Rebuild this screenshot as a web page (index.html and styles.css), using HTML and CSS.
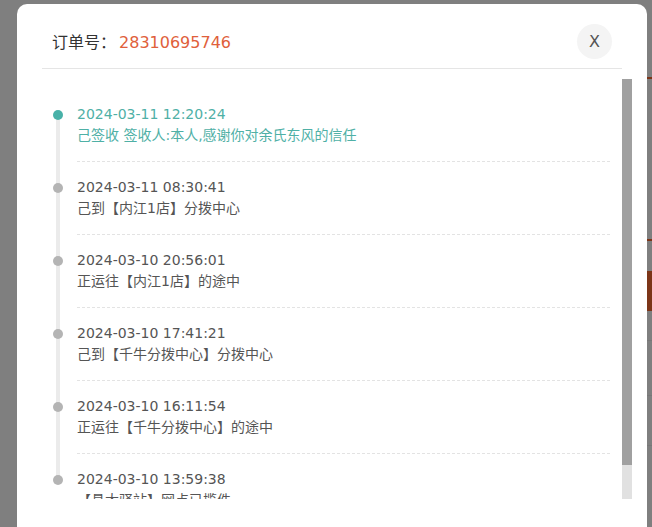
FILE: index.html
```html
<!doctype html>
<html lang="zh-CN">
  <head>
    <meta charset="UTF-8" />
    <meta name="viewport" content="width=device-width, initial-scale=1.0" />
    <title>物流详情</title>
    <link rel="stylesheet" href="styles.css">
  </head>
  <body>
    <!-- page behind the dialog (only its right edge shows) -->
    <div class="page">
      <div class="page-top"></div>
      <div class="page-bar"></div>
      <div class="page-button"></div>
      <div class="page-row"></div>
      <div class="page-row"></div>
      <div class="page-row"></div>
    </div>

    <div class="mask">
      <div class="dialog">
        <header class="dialog-head">
          <h3><span class="label">订单号：</span><span class="order-no">28310695746</span></h3>
          <button class="close-btn" type="button">X</button>
        </header>
        <div class="track-wrap">
          <div class="track-scroll">
            <ul class="track-list">
              <li class="track-item current">
                <div class="track-body">
                  <p class="track-time">2024-03-11 12:20:24</p>
                  <p class="track-text">己签收 签收人:本人,感谢你对余氏东风的信任</p>
                </div>
              </li>
              <li class="track-item">
                <div class="track-body">
                  <p class="track-time">2024-03-11 08:30:41</p>
                  <p class="track-text">己到【内江1店】分拨中心</p>
                </div>
              </li>
              <li class="track-item">
                <div class="track-body">
                  <p class="track-time">2024-03-10 20:56:01</p>
                  <p class="track-text">正运往【内江1店】的途中</p>
                </div>
              </li>
              <li class="track-item">
                <div class="track-body">
                  <p class="track-time">2024-03-10 17:41:21</p>
                  <p class="track-text">己到【千牛分拨中心】分拨中心</p>
                </div>
              </li>
              <li class="track-item">
                <div class="track-body">
                  <p class="track-time">2024-03-10 16:11:54</p>
                  <p class="track-text">正运往【千牛分拨中心】的途中</p>
                </div>
              </li>
              <li class="track-item">
                <div class="track-body">
                  <p class="track-time">2024-03-10 13:59:38</p>
                  <p class="track-text">【悬大驿站】网点已揽件</p>
                </div>
              </li>
            </ul>
          </div>
          <!-- scroll rail -->
          <div class="scroll-rail">
            <div class="scroll-thumb"></div>
          </div>
        </div>
      </div>
    </div>
  </body>
</html>
```

FILE: styles.css
```css
body {
  margin: 0;
  padding: 0;
  font-family: "DejaVu Sans", "Noto Sans CJK SC", sans-serif;
  background-color: #fff;
  overflow: hidden;
}

/* Page behind the mask */
.page {
  width: 40px;
  height: 527px;
  margin-left: auto;
}

.page-top {
  height: 77px;
  border-bottom: 2px solid #f86a30;
}

.page-bar {
  height: 160px;
  border-bottom: 2px solid #f86a30;
}

.page-button {
  height: 40px;
  margin-top: 30px;
  background-color: #f86a30;
}

.page-row {
  height: 29px;
  border-bottom: 1px solid #eee;
}

.page-row + .page-row {
  height: 54px;
}

.page-row:last-child {
  height: 49px;
}

/* Mask + dialog */
.mask {
  position: fixed;
  inset: 0;
  background-color: rgba(0, 0, 0, 0.5);
}

.dialog {
  position: absolute;
  top: 4px;
  left: 17px;
  width: 630px;
  height: 560px;
  background-color: #fff;
  border-radius: 10px;
}

.dialog-head {
  display: flex;
  justify-content: space-between;
  align-items: center;
  margin: 0 25px;
  padding: 20px 10px 9px;
  border-bottom: 1px solid #e5e5e5;
}

.dialog-head h3 {
  margin: 0;
  font-size: 16px;
  font-weight: normal;
  color: #333;
  line-height: 22px;
}

.dialog-head .label {
  font-family: "Noto Sans CJK SC", sans-serif;
  margin-right: 3px;
}

.order-no {
  color: #e0603b;
}

.close-btn {
  width: 35px;
  height: 35px;
  padding: 0;
  border: none;
  border-radius: 50%;
  background-color: #f4f4f4;
  color: #555;
  font-family: "DejaVu Sans", sans-serif;
  font-size: 16px;
  line-height: 35px;
  cursor: pointer;
}

/* Track list with its scroll rail */
.track-wrap {
  display: flex;
  margin: 10px 15px 0 25px;
  height: 420px;
}

.track-scroll {
  flex: 1;
  overflow: hidden;
}

.scroll-rail {
  width: 10px;
  background-color: #e1e1e1;
}

.scroll-thumb {
  height: 386px;
  background-color: #a0a0a0;
}

.track-list {
  list-style: none;
  margin: 0;
  padding: 10px 0 9px;
}

.track-item {
  position: relative;
  padding-left: 35px;
  margin-right: 10px;
}

/* timeline rail */
.track-item::before {
  content: '';
  position: absolute;
  left: 13.5px;
  top: 25.5px;
  width: 4px;
  height: 73px;
  background-color: #ebebeb;
}

.track-item:last-child::before {
  display: none;
}

/* timeline dot */
.track-item::after {
  content: '';
  position: absolute;
  left: 10.5px;
  top: 20.5px;
  width: 10px;
  height: 10px;
  border-radius: 50%;
  background-color: #b4b4b4;
}

.track-item.current::after {
  background-color: #48b1a8;
}

.track-body {
  padding: 15px 0 16px;
  background: repeating-linear-gradient(to right, #e3e3e3 0 3px, transparent 3px 5px) bottom / 100% 1px no-repeat;
}

.track-item:last-child .track-body {
  background: none;
}

.track-time,
.track-text {
  margin: 0;
  font-size: 14px;
  line-height: 21px;
  color: #555;
}

.current .track-time,
.current .track-text {
  color: #4fb0a6;
}
```
